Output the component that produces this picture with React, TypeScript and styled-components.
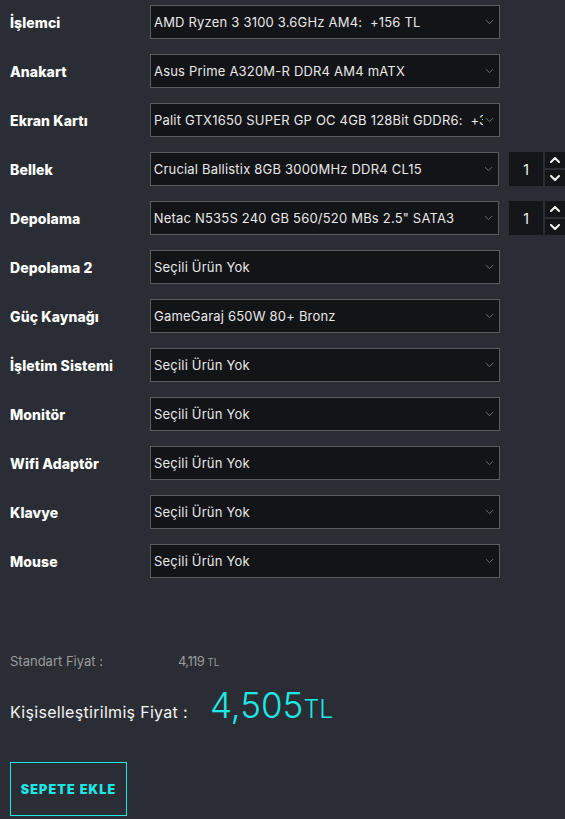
import React, { useState } from "react";
import styled, { createGlobalStyle } from "styled-components";

interface Part {
  label: string;
  value: string;
  qty?: number;
}

const parts: Part[] = [
  { label: "İşlemci", value: "AMD Ryzen 3 3100 3.6GHz AM4:  +156 TL" },
  { label: "Anakart", value: "Asus Prime A320M-R DDR4 AM4 mATX" },
  { label: "Ekran Kartı", value: "Palit GTX1650 SUPER GP OC 4GB 128Bit GDDR6:  +356 TL" },
  { label: "Bellek", value: "Crucial Ballistix 8GB 3000MHz DDR4 CL15", qty: 1 },
  { label: "Depolama", value: 'Netac N535S 240 GB 560/520 MBs 2.5" SATA3', qty: 1 },
  { label: "Depolama 2", value: "Seçili Ürün Yok" },
  { label: "Güç Kaynağı", value: "GameGaraj 650W 80+ Bronz" },
  { label: "İşletim Sistemi", value: "Seçili Ürün Yok" },
  { label: "Monitör", value: "Seçili Ürün Yok" },
  { label: "Wifi Adaptör", value: "Seçili Ürün Yok" },
  { label: "Klavye", value: "Seçili Ürün Yok" },
  { label: "Mouse", value: "Seçili Ürün Yok" },
];

const GlobalStyle = createGlobalStyle`
  html, body {
    margin: 0;
    padding: 0;
    background: #2a2d33;
    font-family: Inter, "Noto Sans", sans-serif;
    color: #fff;
    overflow: hidden;
  }
`;

const SelectChevron = () => (
  <svg width={9} height={5} viewBox="0 0 10 6" fill="none">
    <path d="M1 1 L5 5 L9 1" stroke="#6f7075" strokeWidth={1.2} strokeLinecap="round" strokeLinejoin="round" />
  </svg>
);

const SpinChevron = ({ up = false }: { up?: boolean }) => (
  <svg width={10} height={6} viewBox="0 0 10 6" fill="none">
    <path
      d={up ? "M1 5 L5 1 L9 5" : "M1 1 L5 5 L9 1"}
      stroke="#f2f2f2"
      strokeWidth={2}
      strokeLinecap="round"
      strokeLinejoin="round"
    />
  </svg>
);

const QtyField = ({ initial }: { initial: number }) => {
  const [qty, setQty] = useState(initial);
  return (
    <QtyGroup>
      <QtyValue>{qty}</QtyValue>
      <Spinner>
        <SpinButton onClick={() => setQty(qty + 1)}>
          <SpinChevron up />
        </SpinButton>
        <SpinButton onClick={() => setQty(Math.max(1, qty - 1))}>
          <SpinChevron />
        </SpinButton>
      </Spinner>
    </QtyGroup>
  );
};

const App = () => {
  return (
    <Page>
      <GlobalStyle />
      <Form>
        {parts.map((part) => (
          <Row key={part.label}>
            <Label>{part.label}</Label>
            <SelectBox>
              <SelectText>{part.value}</SelectText>
              <Arrow>
                <SelectChevron />
              </Arrow>
            </SelectBox>
            {part.qty !== undefined && <QtyField initial={part.qty} />}
          </Row>
        ))}
      </Form>

      <Prices>
        <StandardLine>
          <StandardLabel>Standart Fiyat :</StandardLabel>
          <StandardValue>
            4,119 <small>TL</small>
          </StandardValue>
        </StandardLine>
        <CustomLine>
          <CustomLabel>Kişiselleştirilmiş Fiyat :</CustomLabel>
          <CustomValue>
            4,505<span>TL</span>
          </CustomValue>
        </CustomLine>
      </Prices>

      <CartButton>SEPETE EKLE</CartButton>
    </Page>
  );
};

export default App;

const Page = styled.div`
  width: 565px;
  height: 819px;
  padding: 5px 0 0 10px;
  box-sizing: border-box;
  background: #2a2d33;
`;

const Form = styled.div`
  display: flex;
  flex-direction: column;
  gap: 15px;
`;

const Row = styled.div`
  display: flex;
  align-items: center;
  height: 34px;
`;

const Label = styled.div`
  width: 140px;
  font-size: 14px;
  font-weight: 800;
  color: #fff;
  letter-spacing: 0.1px;
`;

const SelectBox = styled.div`
  position: relative;
  display: flex;
  align-items: center;
  width: 350px;
  height: 34px;
  box-sizing: border-box;
  border: 1px solid #5b5c60;
  background: #131417;
  padding: 0 10px 0 3px;
  overflow: hidden;
`;

const SelectText = styled.span`
  font-size: 13px;
  letter-spacing: 0.2px;
  color: #e8e8e8;
  white-space: pre;
  overflow: hidden;
`;

const Arrow = styled.span`
  position: absolute;
  right: 5px;
  top: 50%;
  transform: translateY(-50%);
  display: flex;
  padding: 4px 0 4px 2px;
  background: #131417;
`;

const QtyGroup = styled.div`
  display: flex;
  margin-left: 10px;
  gap: 2px;
  height: 34px;
`;

const QtyValue = styled.div`
  width: 34px;
  display: flex;
  align-items: center;
  justify-content: center;
  background: #141518;
  font-size: 14px;
  color: #f0f0f0;
`;

const Spinner = styled.div`
  display: flex;
  flex-direction: column;
  gap: 2px;
  width: 20px;
`;

const SpinButton = styled.button`
  flex: 1;
  border: none;
  padding: 0;
  background: #141518;
  display: flex;
  align-items: center;
  justify-content: center;
  cursor: pointer;
`;

const Prices = styled.div`
  display: flex;
  flex-direction: column;
  margin-top: 75px;
`;

const StandardLine = styled.div`
  display: flex;
  align-items: baseline;
  height: 20px;
`;

const StandardLabel = styled.span`
  width: 168px;
  font-size: 13px;
  color: #9a9b9f;
`;

const StandardValue = styled.span`
  font-size: 13px;
  color: #9a9b9f;
  letter-spacing: -0.6px;
  small {
    font-size: 10px;
    letter-spacing: 0;
  }
`;

const CustomLine = styled.div`
  display: flex;
  align-items: baseline;
  margin-top: 11px;
`;

const CustomLabel = styled.span`
  width: 200px;
  font-size: 16px;
  letter-spacing: 0.3px;
  color: #f4f4f4;
`;

const CustomValue = styled.span`
  font-size: 35px;
  font-weight: 300;
  color: #1ee8e6;
  span {
    font-size: 25px;
  }
`;

const CartButton = styled.button`
  margin-top: 36px;
  width: 117px;
  height: 54px;
  padding: 0;
  border: 1px solid #1ee8e6;
  background: transparent;
  color: #1ee8e6;
  font-family: Inter, sans-serif;
  font-weight: 900;
  font-size: 12.5px;
  letter-spacing: 1.2px;
  cursor: pointer;
`;
